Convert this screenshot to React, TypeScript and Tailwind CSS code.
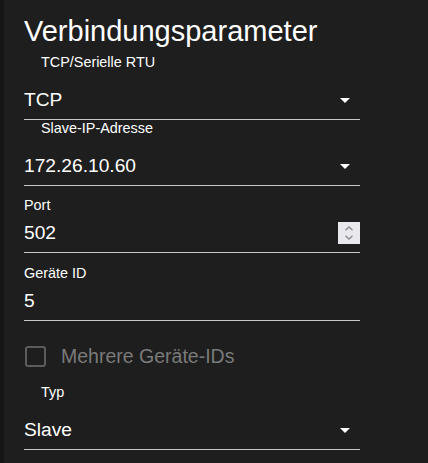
import React from 'react'

const font = { fontFamily: '"Liberation Sans", Arial, sans-serif' }

function DropArrow() {
  return (
    <svg viewBox="0 0 24 24" className="h-6 w-6 shrink-0 fill-white">
      <path d="M7 10l5 5 5-5z" />
    </svg>
  )
}

function SelectField({ label, value, className = '' }: { label: string; value: string; className?: string }) {
  return (
    <div className={`flex flex-col border-b border-[#c8c8c8] pb-[7px] ${className}`}>
      <span className="pl-[17px] text-[14.4px] leading-4 text-white">{label}</span>
      <div className="mt-[18px] flex h-6 items-center justify-between pr-[3px]">
        <span className="text-[19.2px] leading-6 text-white">{value}</span>
        <DropArrow />
      </div>
    </div>
  )
}

function TextField({
  label,
  value,
  spinner,
  className = '',
}: {
  label: string
  value: string
  spinner?: boolean
  className?: string
}) {
  return (
    <div className={`flex flex-col border-b border-[#c8c8c8] pb-[7px] ${className}`}>
      <span className="text-[14.4px] leading-5 text-white">{label}</span>
      <div className="mt-[6px] flex h-6 items-center justify-between">
        <span className="text-[19.2px] leading-6 text-white">{value}</span>
        {spinner && (
          <div className="flex h-[22px] w-[22px] flex-col items-center justify-center gap-[4px] bg-[#e9e9ed]">
            <svg viewBox="0 0 10 5" className="h-[5px] w-[10px]" fill="none" stroke="#8d8d93" strokeWidth="1.4">
              <path d="M1.5 4.3L5 1l3.5 3.3" />
            </svg>
            <svg viewBox="0 0 10 5" className="h-[5px] w-[10px]" fill="none" stroke="#8d8d93" strokeWidth="1.4">
              <path d="M1.5 0.7L5 4l3.5-3.3" />
            </svg>
          </div>
        )}
      </div>
    </div>
  )
}

export default function App() {
  return (
    <div className="flex h-[463px] w-[428px] overflow-hidden bg-[#1e1e1e]" style={font}>
      <div className="w-1 shrink-0 bg-[#161616]" />
      <div className="flex w-[356px] flex-col pl-5 pt-[14px]">
        <h1 className="text-[29px] font-normal leading-[34px] text-white">Verbindungsparameter</h1>

        <SelectField label="TCP/Serielle RTU" value="TCP" className="mt-[6px]" />
        <SelectField label="Slave-IP-Adresse" value="172.26.10.60" />

        <TextField label="Port" value="502" spinner className="mt-[9px]" />
        <TextField label="Geräte ID" value="5" className="mt-[10px]" />

        <label className="mt-[23px] flex h-6 items-center gap-[15px]">
          <span className="ml-px h-[21px] w-[21px] rounded-[3px] border-2 border-[#5c5c5c]" />
          <span className="text-[19.5px] leading-6 text-[#7a7a7a]">Mehrere Geräte-IDs</span>
        </label>

        <SelectField label="Typ" value="Slave" className="mt-[16px]" />
      </div>
    </div>
  )
}
